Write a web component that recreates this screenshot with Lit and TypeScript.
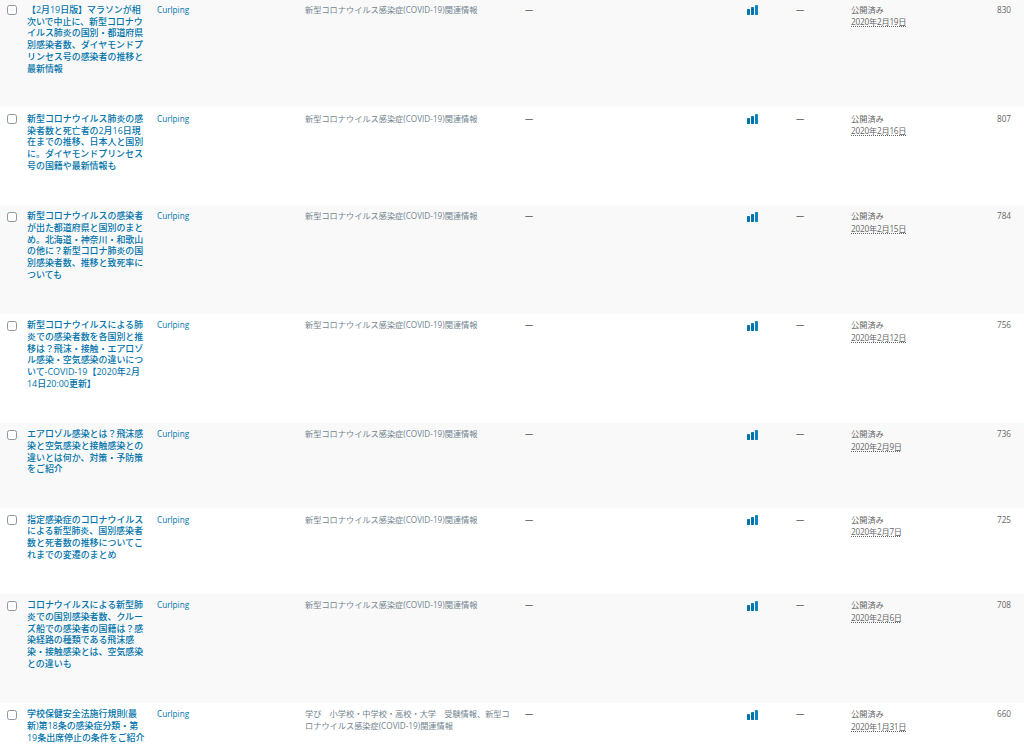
import { LitElement, html, css } from "lit";
import { customElement } from "lit/decorators.js";

const cat = "新型コロナウイルス感染症(COVID-19)関連情報";
const rows = [
  { t: ["【2月19日版】マラソンが相", "次いで中止に、新型コロナウ", "イルス肺炎の国別・都道府県", "別感染者数、ダイヤモンドプ", "リンセス号の感染者の推移と", "最新情報"], c: [cat], d: "2020年2月19日", v: "830" },
  { t: ["新型コロナウイルス肺炎の感", "染者数と死亡者の2月16日現", "在までの推移、日本人と国別", "に。ダイヤモンドプリンセス", "号の国籍や最新情報も"], c: [cat], d: "2020年2月16日", v: "807" },
  { t: ["新型コロナウイルスの感染者", "が出た都道府県と国別のまと", "め。北海道・神奈川・和歌山", "の他に？新型コロナ肺炎の国", "別感染者数、推移と致死率に", "ついても"], c: [cat], d: "2020年2月15日", v: "784" },
  { t: ["新型コロナウイルスによる肺", "炎での感染者数を各国別と推", "移は？飛沫・接触・エアロゾ", "ル感染・空気感染の違いにつ", "いて-COVID-19【2020年2月", "14日20:00更新】"], c: [cat], d: "2020年2月12日", v: "756" },
  { t: ["エアロゾル感染とは？飛沫感", "染と空気感染と接触感染との", "違いとは何か、対策・予防策", "をご紹介"], c: [cat], d: "2020年2月9日", v: "736" },
  { t: ["指定感染症のコロナウイルス", "による新型肺炎、国別感染者", "数と死者数の推移についてこ", "れまでの変遷のまとめ"], c: [cat], d: "2020年2月7日", v: "725" },
  { t: ["コロナウイルスによる新型肺", "炎での国別感染者数、クルー", "ズ船での感染者の国籍は？感", "染経路の種類である飛沫感", "染・接触感染とは、空気感染", "との違いも"], c: [cat], d: "2020年2月6日", v: "708" },
  { t: ["学校保健安全法施行規則(最", "新)第18条の感染症分類・第", "19条出席停止の条件をご紹介"], c: ["学び　小学校・中学校・高校・大学　受験情報、新型コ", "ロナウイルス感染症(COVID-19)関連情報"], d: "2020年1月31日", v: "660" },
];

@customElement("app-root")
export class AppRoot extends LitElement {
  static styles = css`
    :host {
      display: block;
      width: 1024px;
      height: 746px;
      overflow: hidden;
      background: #fff;
      font-family: "Open Sans", "Noto Sans CJK JP", sans-serif;
      font-size: 8.2px;
      line-height: 11.75px;
      color: #666;
    }
    .list {
      margin-top: -1.6px;
    }
    .row {
      display: grid;
      grid-template-columns: 27px 130px 148px 220px 221px 50px 55px 100px 1fr;
      padding: 5.5px 13px 33px 0;
      background: #fff;
    }
    .row:nth-child(odd) {
      background: #f9f9f9;
    }
    .box {
      width: 10px;
      height: 10px;
      margin: 1.5px 0 0 7px;
      box-sizing: border-box;
      border: 1px solid #8c959c;
      border-radius: 2.5px;
      background: #fff;
    }
    .title {
      font-size: 8.95px;
      font-weight: 500;
      color: #0073aa;
      white-space: nowrap;
    }
    .title div {
      height: 11.75px;
    }
    .author {
      color: #0073aa;
    }
    .cats {
      color: #72848f;
      white-space: nowrap;
    }
    .dash {
      color: #444;
    }
    .stats svg {
      display: block;
      width: 11px;
      height: 10px;
      margin: 1.5px 0 0 1px;
    }
    .date {
      white-space: nowrap;
    }
    .date abbr {
      display: block;
      margin-top: 0.7px;
      letter-spacing: -0.2px;
      text-decoration: underline dotted;
    }
    .views {
      text-align: right;
    }
  `;

  render() {
    return html`<div class="list">
      ${rows.map(
        (r) => html`<div class="row">
          <div><div class="box"></div></div>
          <div class="title">${r.t.map((l) => html`<div>${l}</div>`)}</div>
          <div class="author">Curlping</div>
          <div class="cats">${r.c.map((l) => html`<div>${l}</div>`)}</div>
          <div class="dash">—</div>
          <div class="stats">
            <svg viewBox="0 0 11 10" aria-hidden="true">
              <rect x="0" y="4" width="3" height="6" rx="0.4" fill="#0073aa"></rect>
              <rect x="4" y="2" width="3" height="8" rx="0.4" fill="#0073aa"></rect>
              <rect x="8" y="0" width="3" height="10" rx="0.4" fill="#0a84c1"></rect>
            </svg>
          </div>
          <div class="dash">—</div>
          <div class="date">公開済み<abbr>${r.d}</abbr></div>
          <div class="views">${r.v}</div>
        </div>`
      )}
    </div>`;
  }
}
